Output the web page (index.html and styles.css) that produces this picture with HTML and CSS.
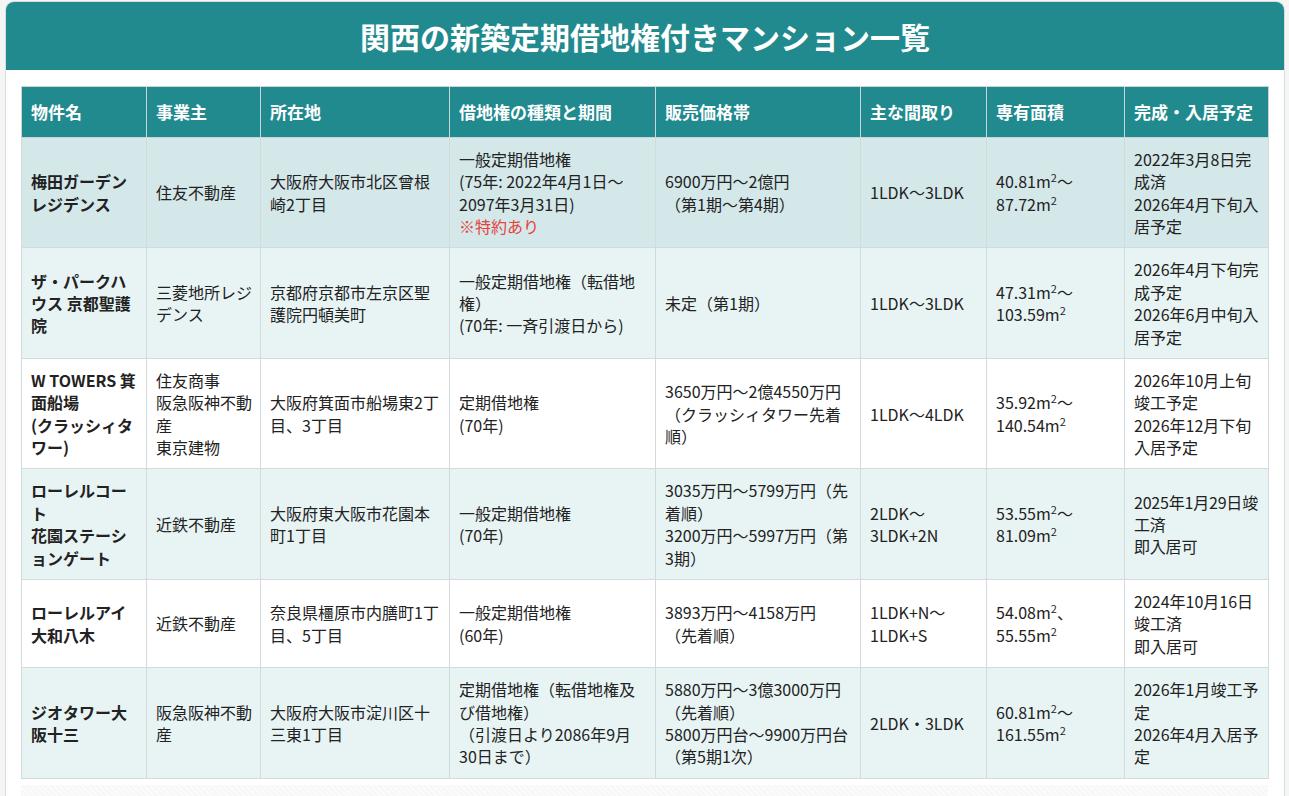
FILE: index.html
```html
<!DOCTYPE html>
<html lang="ja">
<head>
<meta charset="utf-8">
<title>関西の新築定期借地権付きマンション一覧</title>
<link rel="stylesheet" href="styles.css">
</head>
<body>
<div class="card">
  <h1 class="card-title">関西の新築定期借地権付きマンション一覧</h1>
  <div class="card-body">
    <table class="list">
      <colgroup>
        <col class="c1"><col class="c2"><col class="c3"><col class="c4">
        <col class="c5"><col class="c6"><col class="c7"><col class="c8">
      </colgroup>
      <thead>
        <tr>
          <th>物件名</th><th>事業主</th><th>所在地</th><th>借地権の種類と期間</th>
          <th>販売価格帯</th><th>主な間取り</th><th>専有面積</th><th>完成・入居予定</th>
        </tr>
      </thead>
      <tbody>
        <tr class="hl">
          <td class="name">梅田ガーデン<br>レジデンス</td>
          <td>住友不動産</td>
          <td>大阪府大阪市北区曾根崎2丁目</td>
          <td>一般定期借地権<br>(75年: 2022年4月1日～2097年3月31日)<br><span class="note">※特約あり</span></td>
          <td>6900万円～2億円<br>（第1期～第4期）</td>
          <td>1LDK～3LDK</td>
          <td>40.81m<sup>2</sup>～<br>87.72m<sup>2</sup></td>
          <td>2022年3月8日完成済<br>2026年4月下旬入居予定</td>
        </tr>
        <tr class="alt">
          <td class="name">ザ・パークハウス 京都聖護院</td>
          <td>三菱地所レジデンス</td>
          <td>京都府京都市左京区聖護院円頓美町</td>
          <td>一般定期借地権（転借地権）<br>(70年: 一斉引渡日から)</td>
          <td>未定（第1期）</td>
          <td>1LDK～3LDK</td>
          <td>47.31m<sup>2</sup>～<br>103.59m<sup>2</sup></td>
          <td>2026年4月下旬完成予定<br>2026年6月中旬入居予定</td>
        </tr>
        <tr>
          <td class="name">W TOWERS 箕面船場<br>(クラッシィタワー)</td>
          <td>住友商事<br>阪急阪神不動産<br>東京建物</td>
          <td>大阪府箕面市船場東2丁目、3丁目</td>
          <td>定期借地権<br>(70年)</td>
          <td>3650万円～2億4550万円<br>（クラッシィタワー先着順）</td>
          <td>1LDK～4LDK</td>
          <td>35.92m<sup>2</sup>～<br>140.54m<sup>2</sup></td>
          <td>2026年10月上旬<br>竣工予定<br>2026年12月下旬<br>入居予定</td>
        </tr>
        <tr class="alt">
          <td class="name">ローレルコート<br>花園ステーションゲート</td>
          <td>近鉄不動産</td>
          <td>大阪府東大阪市花園本町1丁目</td>
          <td>一般定期借地権<br>(70年)</td>
          <td>3035万円～5799万円（先着順）<br>3200万円～5997万円（第3期）</td>
          <td>2LDK～<br>3LDK+2N</td>
          <td>53.55m<sup>2</sup>～<br>81.09m<sup>2</sup></td>
          <td class="tight">2025年1月29日竣工済<br>即入居可</td>
        </tr>
        <tr>
          <td class="name">ローレルアイ<br>大和八木</td>
          <td>近鉄不動産</td>
          <td>奈良県橿原市内膳町1丁目、5丁目</td>
          <td>一般定期借地権<br>(60年)</td>
          <td>3893万円～4158万円<br>（先着順）</td>
          <td>1LDK+N～<br>1LDK+S</td>
          <td>54.08m<sup>2</sup>、<br>55.55m<sup>2</sup></td>
          <td>2024年10月16日<br>竣工済<br>即入居可</td>
        </tr>
        <tr class="alt">
          <td class="name">ジオタワー大阪十三</td>
          <td>阪急阪神不動産</td>
          <td>大阪府大阪市淀川区十三東1丁目</td>
          <td>定期借地権（転借地権及び借地権）<br>（引渡日より2086年9月30日まで）</td>
          <td>5880万円～3億3000万円<br>（先着順）<br>5800万円台～9900万円台<br>（第5期1次）</td>
          <td>2LDK・3LDK</td>
          <td>60.81m<sup>2</sup>～<br>161.55m<sup>2</sup></td>
          <td>2026年1月竣工予定<br>2026年4月入居予定</td>
        </tr>
      </tbody>
    </table>
    <div class="scroll-strip"></div>
  </div>
</div>
</body>
</html>
```

FILE: styles.css
```css
html, body {
  margin: 0;
  padding: 0;
  background: #f4f5f5;
}

body {
  font-family: "Noto Sans CJK JP", "Noto Sans", sans-serif;
  color: #222;
  padding: 1px 4px 0 5px;
}

.card {
  background: #fff;
  border: 1px solid #dcdcdc;
  border-bottom: none;
  border-radius: 9px 9px 0 0;
  overflow: hidden;
}

.card-title {
  margin: 0;
  background: #218a8e;
  color: #fff;
  text-align: center;
  font-size: 30px;
  font-weight: 700;
  line-height: 68px;
  height: 68px;
}

.card-body {
  padding: 16px 16px 0 15px;
}

.list {
  width: 1247px;
  border-collapse: collapse;
  table-layout: fixed;
  font-size: 16px;
  line-height: 1.4;
}

.c1 { width: 125px; }
.c2 { width: 114px; }
.c3 { width: 189px; }
.c4 { width: 206px; }
.c5 { width: 205px; }
.c6 { width: 126px; }
.c7 { width: 138px; }
.c8 { width: 144px; }

.list th {
  background: #218a8e;
  color: #fff;
  font-size: 17px;
  font-weight: 700;
  text-align: left;
  padding: 13px 9px;
  border: 1px solid #c8d4d6;
}

.list td {
  padding: 10px 8px 10px 9px;
  border: 1px solid #d3dadc;
  vertical-align: middle;
  line-break: normal;
}

.list td.tight {
  padding-right: 4px;
  letter-spacing: -0.2px;
}

.list tbody tr { background: #fff; }
.list tbody tr.alt { background: #e8f4f4; }
.list tbody tr.hl { background: #d4e7e9; }

.list td.name { font-weight: 700; }

.list sup {
  font-size: 11px;
  line-height: 0;
  vertical-align: 6px;
}

.note { color: #e5433f; }

.scroll-strip {
  height: 12px;
  margin-top: 6px;
  background: repeating-linear-gradient(45deg, #f7f7f7 0 2px, #fbfbfb 2px 4px);
}
```
